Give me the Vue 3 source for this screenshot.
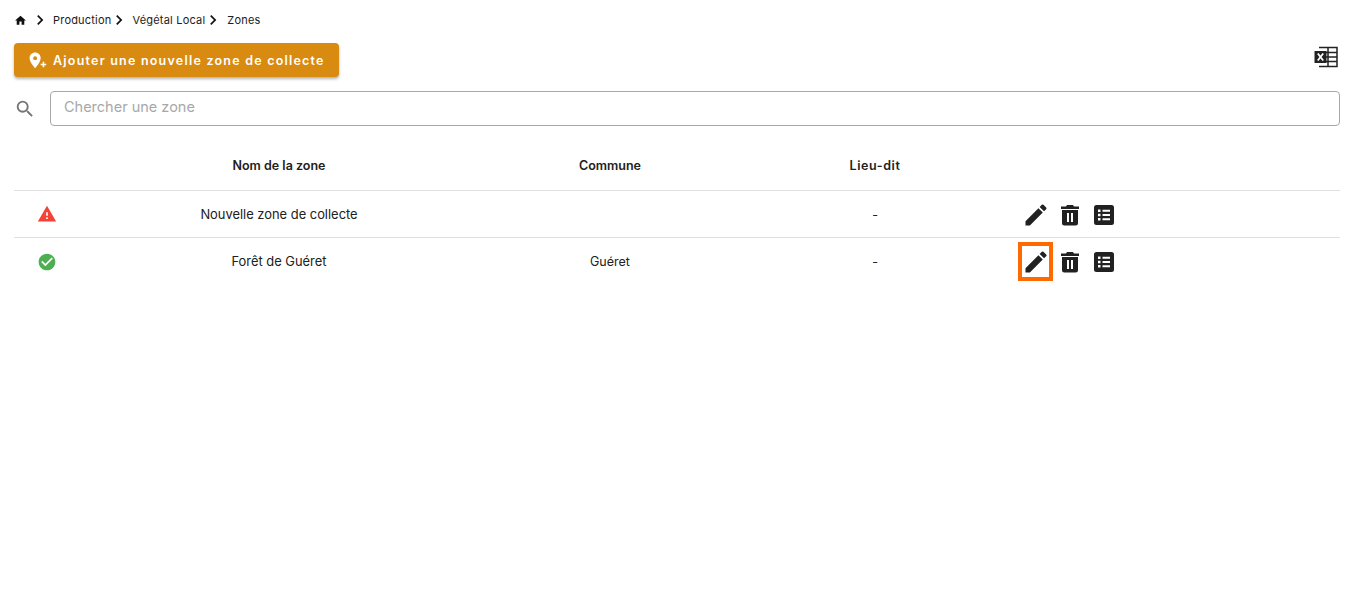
<script setup>
const rows = [
  { id: 1, ok: false, name: 'Nouvelle zone de collecte', commune: '', lieu: '-', focus: false },
  { id: 2, ok: true, name: 'Forêt de Guéret', commune: 'Guéret', lieu: '-', focus: true },
]
const crumbs = ['Production', 'Végétal Local', 'Zones']
</script>

<template>
  <div class="page">
    <nav class="crumbs">
      <svg class="home" viewBox="0 0 24 24"><path d="M10 20v-6h4v6h5v-8h3L12 3 2 12h3v8z" /></svg>
      <template v-for="c in crumbs" :key="c">
        <svg class="chev" viewBox="0 0 24 24"><path d="M8.590 16.590 13.170 12 8.590 7.410 10 6l6 6-6 6z" /></svg>
        <span class="crumb">{{ c }}</span>
      </template>
    </nav>
    <div class="toolbar">
      <button class="add">
        <svg viewBox="0 0 24 24"><path d="M9 2C5.100 2 2 5.100 2 9c0 5.250 7 12.500 7 12.500S16 14.250 16 9c0-3.900-3.100-7-7-7zm0 9.500a2.500 2.500 0 1 1 0-5 2.500 2.500 0 0 1 0 5z" /><path d="M23 16h-2.500v-2.500h-2V16H16v2h2.500v2.500h2V18H23z" /></svg>
        Ajouter une nouvelle zone de collecte
      </button>
      <svg class="excel" viewBox="0 0 24 22">
        <path fill="none" stroke="#222" stroke-width="1.500" d="M5 1.500h18v19H5M14 1.500v19M5 6.500h18M5 11h18M5 15.500h18" />
        <rect x="0.500" y="5" width="12" height="12" fill="#222" />
        <path fill="none" stroke="#fff" stroke-width="1.800" d="m3.800 7.500 5.400 7m0-7-5.400 7" />
      </svg>
    </div>
    <div class="search">
      <svg viewBox="0 0 24 24"><path d="M15.500 14h-.79l-.28-.27A6.470 6.470 0 0 0 16 9.500 6.500 6.500 0 1 0 9.500 16c1.610 0 3.090-.59 4.230-1.570l.27.28v.79l5 4.990L20.490 19l-4.990-5zm-6 0C7.010 14 5 11.990 5 9.500S7.010 5 9.500 5 14 7.010 14 9.500 11.990 14 9.500 14z" /></svg>
      <input placeholder="Chercher une zone" />
    </div>
    <div class="table">
      <div class="row head">
        <div></div>
        <div>Nom de la zone</div>
        <div>Commune</div>
        <div class="lieu">Lieu-dit</div>
        <div></div>
      </div>
      <div v-for="r in rows" :key="r.id" class="row body">
        <div class="status">
          <svg v-if="r.ok" viewBox="0 0 24 24" class="ok"><path d="M12 2C6.480 2 2 6.480 2 12s4.480 10 10 10 10-4.480 10-10S17.520 2 12 2zm-2 15-5-5 1.410-1.410L10 14.170l7.590-7.590L19 8l-9 9z" /></svg>
          <svg v-else viewBox="0 0 24 24" class="warn"><path d="M1 21h22L12 2 1 21zm12-3h-2v-2h2v2zm0-4h-2v-4h2v4z" /></svg>
        </div>
        <div class="name">{{ r.name }}</div>
        <div>{{ r.commune }}</div>
        <div>{{ r.lieu }}</div>
        <div class="actions">
          <span class="act" :class="{ focus: r.focus }">
            <svg class="pen" viewBox="0 0 24 24"><path d="M3 17.250V21h3.750L17.810 9.940l-3.750-3.750L3 17.250zM20.710 7.040a1 1 0 0 0 0-1.410l-2.340-2.340a1 1 0 0 0-1.410 0l-1.830 1.830 3.750 3.750 1.830-1.830z" /></svg>
          </span>
          <span class="act">
            <svg viewBox="0 0 24 24"><path fill-rule="evenodd" d="M9 2h6l1 1.500h5V6H3V3.500h5zM4 7h16v13a2.500 2.500 0 0 1-2.500 2.500h-11A2.500 2.500 0 0 1 4 20zm5 3v9h2v-9zm4 0v9h2v-9z" /></svg>
          </span>
          <span class="act">
            <svg viewBox="0 0 24 24"><path fill-rule="evenodd" d="M4.500 2h15A2.500 2.500 0 0 1 22 4.500v15a2.500 2.500 0 0 1-2.500 2.500h-15A2.500 2.500 0 0 1 2 19.500v-15A2.500 2.500 0 0 1 4.500 2zM6 6.500v2.500h2.500V6.500zm4.500 0.300v2h7.500v-2zM6 10.800v2.500h2.500v-2.500zm4.500 0.300v2h7.500v-2zM6 15v2.500h2.500V15zm4.500 0.300v2h7.500v-2z" /></svg>
          </span>
        </div>
      </div>
    </div>
  </div>
</template>

<style scoped>
.page { padding: 0 9px 0 14px; height: 594px; box-sizing: border-box; font-family: Inter, "Liberation Sans", sans-serif; color: #212121; }
.crumbs { height: 40px; display: flex; align-items: center; font-size: 11px; letter-spacing: .2px; }
.crumbs svg { fill: #111; }
.home { width: 13px; height: 13px; margin-right: 5px; }
.chev { width: 20px; height: 20px; margin: 0 3px 0 -2px; }
.crumb:last-child { margin-left: 1px; }
.toolbar { height: 34px; margin-top: 3px; display: flex; align-items: flex-start; justify-content: space-between; }
.add { height: 34px; width: 325px; padding: 0 0 0 14px; border: 0; border-radius: 4px; background: #d98a10; color: #fff; font: 600 12.500px Inter, "Liberation Sans", sans-serif; letter-spacing: 1.220px; display: flex; align-items: center; gap: 6px; box-shadow: 0 2px 3px rgba(0,0,0,.3); }
.add svg { width: 19px; height: 19px; fill: #fff; }
.excel { width: 24px; height: 22px; margin: 3px 2px 0 0; }
.search { display: flex; align-items: center; margin-top: 14px; gap: 14px; }
.search svg { width: 22px; height: 22px; fill: #757575; }
.search input { flex: 1; height: 35px; box-sizing: border-box; border: 1px solid #a8a8a8; border-radius: 4px; padding: 0 13px 4px; font: 14.500px Inter, "Liberation Sans", sans-serif; outline: none; }
.search input::placeholder { color: #a8a8a8; }
.table { margin-top: 17px; }
.row { display: grid; grid-template-columns: 66px 398px 264px 266px 1fr; align-items: center; text-align: center; font-size: 12.500px; }
.head { height: 48px; font-weight: 600; border-bottom: 1px solid #e0e0e0; padding-bottom: 2px; box-sizing: border-box; }
.lieu { letter-spacing: .6px; }
.name { font-size: 12.900px; }
.body { height: 47px; box-sizing: border-box; border-bottom: 1px solid #e0e0e0; }
.body:last-child { border-bottom: 0; }
.status { display: flex; padding-left: 23px; }
.status svg { width: 20px; height: 20px; }
.warn { fill: #f44336; }
.ok { fill: #4caf50; }
.actions { display: flex; align-items: center; padding-left: 10px; }
.act { width: 34px; height: 39px; box-sizing: border-box; display: flex; align-items: center; justify-content: center; padding: 1px 0 0 1px; }
.act svg { width: 24px; height: 24px; fill: #212121; }
.act svg.pen { width: 28px; height: 28px; }
.act.focus { width: 35px; margin-right: -1px; padding-right: 1px; outline: 4px solid #ff6a00; outline-offset: -4px; }
</style>
